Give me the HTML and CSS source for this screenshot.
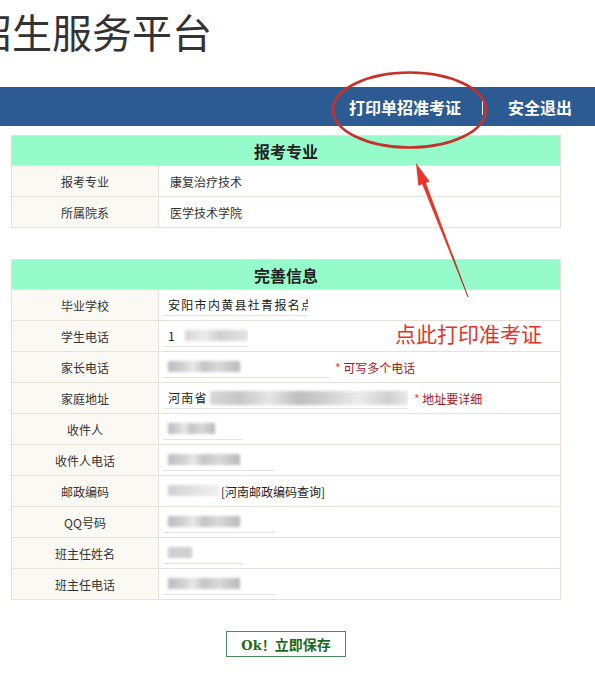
FILE: index.html
```html
<!DOCTYPE html>
<html lang="zh-CN">
<head>
<meta charset="utf-8">
<title>招生服务平台</title>
<link rel="stylesheet" href="styles.css">
</head>
<body>
<div class="page">
  <header class="masthead">
    <h1 class="site-title">招生服务平台</h1>
  </header>
  <nav class="topbar">
    <a class="nav-item nav-print">打印单招准考证</a>
    <span class="nav-sep"></span>
    <a class="nav-item nav-exit">安全退出</a>
  </nav>

  <main class="content">
    <table class="form-table">
      <tr><th colspan="2">报考专业</th></tr>
      <tr><td class="label">报考专业</td><td class="value plain">康复治疗技术</td></tr>
      <tr><td class="label">所属院系</td><td class="value plain">医学技术学院</td></tr>
    </table>

    <table class="form-table second">
      <tr><th colspan="2">完善信息</th></tr>
      <tr><td class="label">毕业学校</td><td class="value"><div class="field w145"><span class="spaced">安阳市内黄县社青报名点</span></div></td></tr>
      <tr><td class="label">学生电话</td><td class="value"><div class="field w85"><span class="txt">1</span><span class="blur b1"></span></div></td></tr>
      <tr><td class="label">家长电话</td><td class="value"><div class="field w166"><span class="blur b2"></span></div><span class="note"><i>*</i> 可写多个电话</span></td></tr>
      <tr><td class="label">家庭地址</td><td class="value"><div class="field w245"><span class="txt spaced">河南省</span><span class="blur b3"></span></div><span class="note"><i>*</i> 地址要详细</span></td></tr>
      <tr><td class="label">收件人</td><td class="value"><div class="field w80"><span class="blur b4"></span></div></td></tr>
      <tr><td class="label">收件人电话</td><td class="value"><div class="field w112"><span class="blur b2"></span></div></td></tr>
      <tr><td class="label">邮政编码</td><td class="value"><div class="field w58 noline"><span class="blur b5"></span></div><a class="zip-link">[河南邮政编码查询]</a></td></tr>
      <tr><td class="label">QQ号码</td><td class="value"><div class="field w112"><span class="blur b2"></span></div></td></tr>
      <tr><td class="label">班主任姓名</td><td class="value"><div class="field w80"><span class="blur b6"></span></div></td></tr>
      <tr><td class="label">班主任电话</td><td class="value"><div class="field w112"><span class="blur b2"></span></div></td></tr>
    </table>

    <div class="actions">
      <button class="save-btn"><span class="ok">Ok！</span>立即保存</button>
    </div>
  </main>

  <div class="callout-text">点此打印准考证</div>
  <svg class="annotation" width="595" height="674" viewBox="0 0 595 674" aria-hidden="true">
    <ellipse cx="409.5" cy="110" rx="76.5" ry="37.5" fill="none" stroke="#c8312b" stroke-width="2.6"/>
    <polygon points="416,163 429.6,181.6 426,182.9 468.3,297 467.7,297 422.2,184.3 418.4,185.8" fill="#e8362c"/>
    <line x1="452" y1="254" x2="468" y2="297" stroke="#8f3b2c" stroke-width="0.8"/>
  </svg>
</div>
</body>
</html>
```

FILE: styles.css
```css
* { box-sizing: border-box; }
html, body { margin: 0; padding: 0; background: #fff; }
body {
  font-family: "Noto Sans CJK SC", "Noto Sans", "DejaVu Sans", sans-serif;
  color: #333;
  overflow: hidden;
}
.page {
  position: relative;
  width: 595px;
  height: 674px;
  overflow: hidden;
}
.masthead {
  height: 87px;
  padding-top: 11px;
}
.site-title {
  margin: 0 0 0 -28px;
  font-size: 40px;
  line-height: 40px;
  font-weight: 400;
  color: #333;
  white-space: nowrap;
  letter-spacing: 0;
}
.topbar {
  height: 39px;
  background: #2b5b92;
  display: flex;
  align-items: center;
  justify-content: flex-end;
  padding-right: 23px;
}
.nav-item {
  color: #fff;
  font-weight: 700;
  font-size: 16px;
  line-height: 20px;
  white-space: nowrap;
  text-decoration: none;
}
.nav-sep {
  width: 1px;
  height: 17px;
  background: #e6ecf4;
  margin: 0 25px 0 21px;
}
.content {
  padding: 9px 0 0 11px;
}
.form-table {
  width: 550px;
  border-collapse: collapse;
  font-size: 12px;
}
.form-table.second {
  margin-top: 31px;
}
.form-table th {
  height: 30px;
  background: #96fbcb;
  color: #222;
  font-size: 16px;
  font-weight: 700;
  text-align: center;
  border: 1px solid #e6e2d8;
  padding: 0;
}
.form-table td {
  height: 31px;
  border: 1px solid #e6e2d8;
  padding: 0;
}
.form-table .label {
  width: 147px;
  background: #fbf9f4;
  text-align: center;
  color: #333;
}
.form-table .value {
  padding-left: 4px;
  white-space: nowrap;
}
.form-table .value.plain {
  padding-left: 11px;
}
.field {
  display: inline-flex;
  align-items: center;
  vertical-align: middle;
  height: 22px;
  padding-left: 5px;
  border-bottom: 1px solid #e4e4e4;
  overflow: hidden;
  white-space: nowrap;
}
.field.noline { border-bottom-color: transparent; }
.w58 { width: 58px; }
.w80 { width: 80px; }
.w85 { width: 85px; }
.w112 { width: 112px; }
.w145 { width: 145px; }
.w166 { width: 166px; }
.w245 { width: 245px; }
.spaced { letter-spacing: 1.3px; color: #222; }
.txt { color: #222; }
.blur {
  display: inline-block;
  height: 11px;
  filter: blur(1.4px);
  background: linear-gradient(90deg, #bdbdbd 0%, #cfcfcf 20%, #e8e8e8 35%, #c4c4c4 50%, #d9d9d9 70%, #b9b9b9 100%);
}
.b1 { width: 66px; margin-left: 10px; background: linear-gradient(90deg, #d6d6d6 0%, #ececec 30%, #d0d0d0 55%, #e4e4e4 100%); }
.b2 { width: 72px; }
.b3 { width: 222px; height: 14px; margin-left: 2px; background: linear-gradient(90deg, #d8d8d8 0%, #c6c6c6 15%, #e6e6e6 30%, #bdbdbd 45%, #d2d2d2 60%, #ececec 75%, #cfcfcf 90%, #e8e8e8 100%); }
.b4 { width: 47px; }
.b5 { width: 52px; background: linear-gradient(90deg, #d0d0d0 0%, #e6e6e6 60%, #f0f0f0 100%); }
.b6 { width: 24px; background: #cfcfcf; }
.note {
  margin-left: 6px;
  color: #a8161f;
  font-size: 12px;
  vertical-align: middle;
}
.note i {
  font-style: normal;
  color: #d9534f;
}
.zip-link {
  color: #222;
  font-size: 12px;
  margin-left: 0;
  vertical-align: middle;
}
.actions {
  display: flex;
  justify-content: center;
  width: 550px;
  padding-top: 31px;
}
.save-btn {
  width: 120px;
  height: 26px;
  border: 1px solid #4a8a5e;
  background: #fff;
  color: #1d6a1d;
  font-family: "Noto Sans CJK SC", sans-serif;
  font-size: 14px;
  font-weight: 700;
  padding: 0;
  line-height: 24px;
}
.save-btn .ok {
  font-family: "DejaVu Serif", "Liberation Serif", serif;
  font-size: 13px;
}
.callout-text {
  position: absolute;
  left: 395px;
  top: 320px;
  font-size: 21px;
  line-height: 26px;
  color: #e6332a;
  font-weight: 400;
  white-space: nowrap;
}
.annotation {
  position: absolute;
  left: 0;
  top: 0;
  pointer-events: none;
}
```
